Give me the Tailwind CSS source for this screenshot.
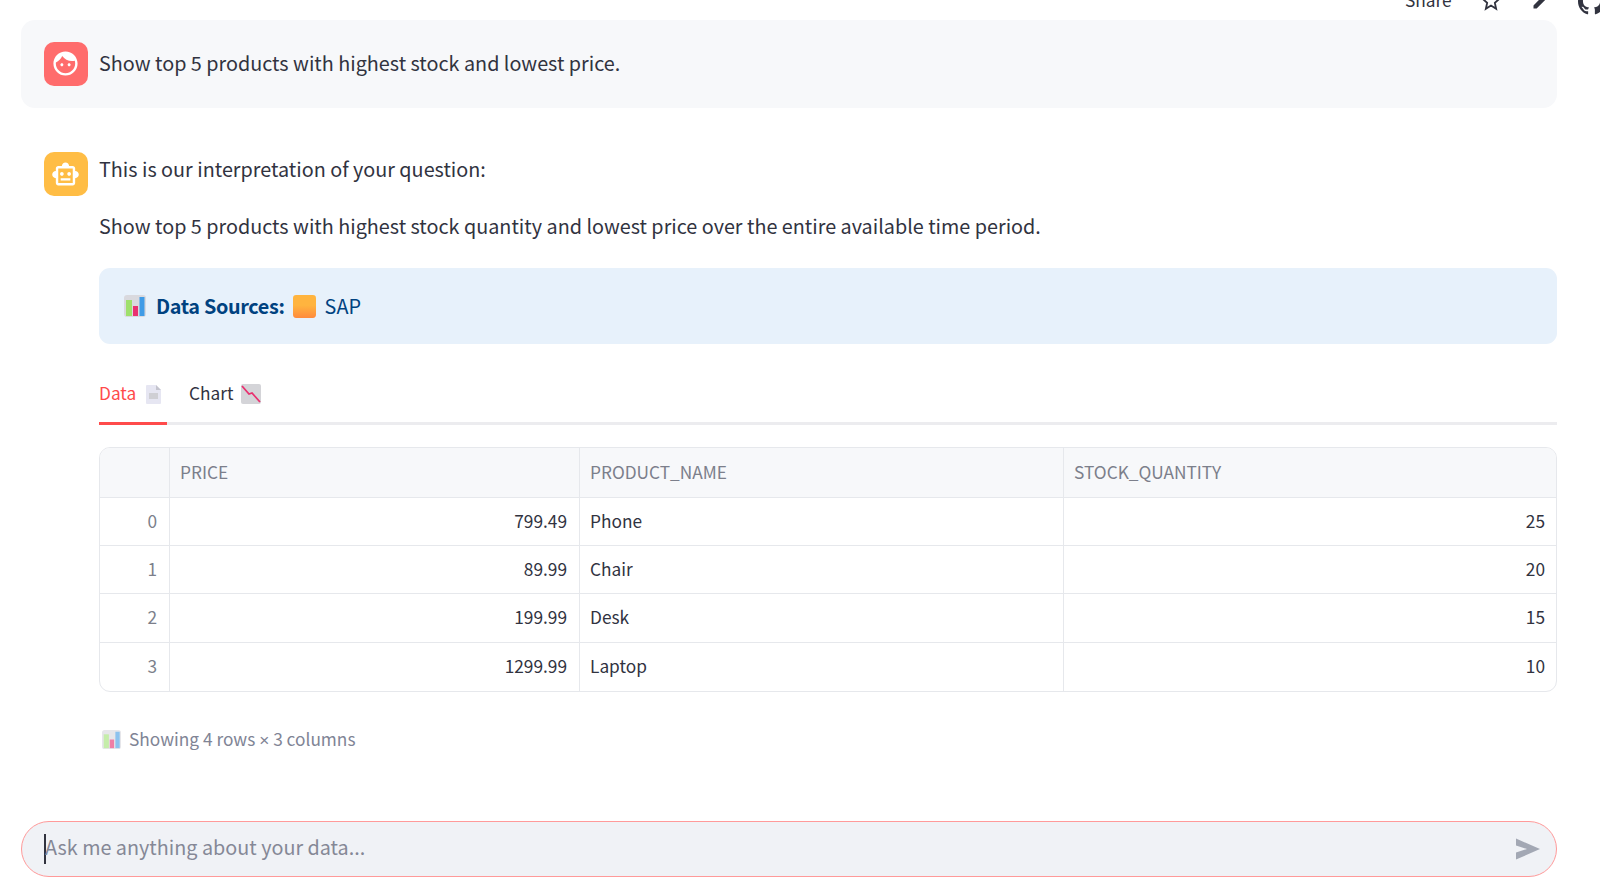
<!DOCTYPE html>
<html>
<head>
<meta charset="utf-8">
<script src="https://cdn.jsdelivr.net/npm/@tailwindcss/browser@4"></script>
</head>
<body class="bg-white">
<div class="relative w-[1600px] h-[885px] overflow-hidden bg-white font-['Noto_Sans_CJK_SC','Noto_Sans',sans-serif] text-[#31333f]">

  <!-- top toolbar, cut by the window edge -->
  <div class="absolute right-[-5px] top-[-11px] flex items-center h-[24px] text-[#31333f]">
    <span class="text-[17.300px] leading-[24px] mr-[28.500px] mt-[-3px]">Share</span>
    <svg class="w-[22px] h-[22px] mr-[29px]" viewBox="0 0 24 24" fill="none" stroke="#31333f" stroke-width="2"><path d="M12 3l2.700 6.100 6.300.6-4.800 4.300 1.400 6.500L12 17l-5.600 3.500 1.400-6.500L3 9.700l6.300-.6z"/></svg>
    <svg class="w-[20px] h-[20px] mr-[27px] mt-[-1px]" viewBox="0 0 24 24" fill="#31333f"><path d="M3 17.250V21h3.750L17.810 9.940l-3.750-3.750L3 17.250zM20.710 7.040a1 1 0 000-1.410l-2.340-2.340a1 1 0 00-1.410 0l-1.830 1.830 3.750 3.750 1.830-1.830z"/></svg>
    <svg class="w-[27px] h-[27px]" viewBox="0 0 16 16" fill="#31333f"><path d="M8 0C3.580 0 0 3.580 0 8c0 3.540 2.290 6.530 5.470 7.590.4.070.55-.17.55-.38 0-.19-.01-.82-.01-1.490-2.010.37-2.530-.49-2.690-.94-.09-.23-.48-.94-.82-1.130-.28-.15-.68-.52-.01-.53.63-.01 1.080.58 1.230.82.720 1.210 1.870.87 2.330.66.070-.52.280-.87.510-1.070-1.780-.2-3.640-.89-3.640-3.950 0-.87.310-1.590.820-2.150-.08-.2-.36-1.020.080-2.120 0 0 .67-.21 2.200.820.640-.18 1.320-.27 2-.27s1.360.09 2 .27c1.530-1.040 2.200-.82 2.200-.82.440 1.100.160 1.920.080 2.120.510.560.820 1.270.820 2.150 0 3.070-1.870 3.750-3.650 3.950.290.250.540.730.540 1.480 0 1.070-.01 1.930-.01 2.200 0 .21.150.460.550.380A8.010 8.010 0 0016 8c0-4.420-3.580-8-8-8z"/></svg>
  </div>

  <div class="flex flex-col w-[1536px] ml-[21px] pt-[20px]">

    <!-- user message -->
    <div class="flex items-center gap-[11.500px] h-[88px] px-[22.500px] bg-[#f7f8fa] rounded-[14px]">
      <div class="flex items-center justify-center w-[44px] h-[44px] mt-[-1px] rounded-[10px] bg-[#ff6c6c]">
        <svg class="w-[29px] h-[29px]" viewBox="0 0 24 24" fill="#fff"><path d="M9 11.750c-.69 0-1.250.56-1.250 1.250s.56 1.250 1.250 1.250 1.250-.56 1.250-1.250-.56-1.250-1.250-1.250zm6 0c-.69 0-1.250.56-1.250 1.250s.56 1.250 1.250 1.250 1.250-.56 1.250-1.250-.56-1.250-1.250-1.250zM12 2C6.480 2 2 6.480 2 12s4.480 10 10 10 10-4.480 10-10S17.520 2 12 2zm0 18c-4.410 0-8-3.590-8-8 0-.29.020-.58.050-.86 2.360-1.050 4.230-2.980 5.210-5.370C11.070 8.330 14.050 10 17.420 10c.78 0 1.530-.09 2.250-.26.21.71.33 1.470.33 2.260 0 4.410-3.590 8-8 8z"/></svg>
      </div>
      <p class="text-[19.800px] leading-[32px] mt-[-2px]">Show top 5 products with highest stock and lowest price.</p>
    </div>

    <!-- assistant message -->
    <div class="flex gap-[11.500px] pl-[22.500px] pt-[44px]">
      <div class="flex items-center justify-center shrink-0 w-[44px] h-[44px] rounded-[10px] bg-[#ffbd45]">
        <svg class="w-[29px] h-[29px]" viewBox="0 0 24 24" fill="#fff"><path d="M20 9V7c0-1.100-.9-2-2-2h-3c0-1.660-1.340-3-3-3S9 3.340 9 5H6c-1.100 0-2 .9-2 2v2c-1.660 0-3 1.340-3 3s1.340 3 3 3v4c0 1.100.9 2 2 2h12c1.100 0 2-.9 2-2v-4c1.660 0 3-1.340 3-3s-1.340-3-3-3zm-2 10H6V7h12v12zm-9-6c-.83 0-1.500-.67-1.500-1.500S8.170 10 9 10s1.500.67 1.500 1.500S9.830 13 9 13zm7.500-1.500c0 .83-.67 1.500-1.500 1.500s-1.500-.67-1.500-1.500.67-1.500 1.500-1.500 1.500.67 1.500 1.500zM8 15h8v2H8v-2z"/></svg>
      </div>
      <div class="flex-1 min-w-0">
        <p class="text-[19.800px] leading-[32px] mt-[1px]">This is our interpretation of your question:</p>
        <p class="text-[19.800px] leading-[32px] mt-[25px]">Show top 5 products with highest stock quantity and lowest price over the entire available time period.</p>

        <!-- info box -->
        <div class="flex items-center h-[76px] mt-[26px] pl-[25px] rounded-[11px] bg-[#e7f1fb] text-[19.800px] text-[#004280]">
          <svg class="w-[22px] h-[22px] mr-[10px]" viewBox="0 0 22 22"><rect width="22" height="22" rx="3" fill="#d9d9de"/><rect x="2" y="5" width="6" height="16" fill="#9fe06c"/><rect x="9" y="11" width="5" height="10" fill="#e9306f"/><rect x="15.500" y="2" width="5" height="19" fill="#3f9be6"/></svg>
          <b class="font-semibold tracking-[-0.32px] mt-[-1px]">Data Sources:</b>
          <svg class="w-[23px] h-[23px] ml-[8px] mr-[9px]" viewBox="0 0 22 22"><defs><linearGradient id="o" x1="0" y1="0" x2="0" y2="1"><stop offset=".45" stop-color="#ffb43f"/><stop offset="1" stop-color="#ff8a3c"/></linearGradient></defs><rect width="22" height="22" rx="3" fill="url(#o)"/></svg>
          <span class="mt-[-1px]">SAP</span>
        </div>

        <!-- tabs -->
        <div class="flex h-[58px] mt-[23px] border-b-[3px] border-[#ececef] text-[17.300px]">
          <div class="flex items-center gap-[10px] h-[58px] w-[68px] border-b-[3px] border-[#ff4b4b] text-[#ff4b4b]">
            <span class="mt-[-3px]">Data</span>
            <svg class="w-[15px] h-[19px] mt-[-1px]" viewBox="0 0 15 19"><path d="M0 1a1 1 0 011-1h9l5 5v13a1 1 0 01-1 1H1a1 1 0 01-1-1z" fill="#e6e6f2"/><path d="M10 0l5 5h-5z" fill="#c4c4ce"/><rect x="3" y="8" width="9" height="6" fill="#cfcfd4"/></svg>
          </div>
          <div class="flex items-center gap-[8px] ml-[22px] h-[58px] border-b-[3px] border-transparent">
            <span class="mt-[-3px]">Chart</span>
            <svg class="w-[20px] h-[20px] mt-[-1px]" viewBox="0 0 20 20"><rect width="20" height="20" rx="2" fill="#d4d4d8"/><path d="M1 2l7 8 3-1 8 9" fill="none" stroke="#e9306f" stroke-width="1.800"/></svg>
          </div>
        </div>

        <!-- table -->
        <div class="mt-[22px] border border-[#e6e8ec] rounded-[11px] overflow-hidden text-[17.300px] grid grid-cols-[70px_410px_484px_1fr] grid-rows-[50px_repeat(4,48.200px)]">
          <div class="bg-[#f7f8fa] border-r border-b border-[#e6e8ec]"></div>
          <div class="bg-[#f7f8fa] border-r border-b border-[#e6e8ec] text-[#7c7f8b] flex items-center px-[10px] pb-[2px]">PRICE</div>
          <div class="bg-[#f7f8fa] border-r border-b border-[#e6e8ec] text-[#7c7f8b] flex items-center px-[10px] pb-[2px]">PRODUCT_NAME</div>
          <div class="bg-[#f7f8fa] border-b border-[#e6e8ec] text-[#7c7f8b] flex items-center px-[10px] pb-[2px]">STOCK_QUANTITY</div>

          <div class="border-r border-b border-[#e6e8ec] text-[#7c7f8b] flex items-center justify-end px-[12px] pb-[2px]">0</div>
          <div class="border-r border-b border-[#e6e8ec] flex items-center justify-end px-[12px] pb-[2px]">799.49</div>
          <div class="border-r border-b border-[#e6e8ec] flex items-center px-[10px] pb-[2px]">Phone</div>
          <div class="border-b border-[#e6e8ec] flex items-center justify-end px-[11px] pb-[2px]">25</div>

          <div class="border-r border-b border-[#e6e8ec] text-[#7c7f8b] flex items-center justify-end px-[12px] pb-[2px]">1</div>
          <div class="border-r border-b border-[#e6e8ec] flex items-center justify-end px-[12px] pb-[2px]">89.99</div>
          <div class="border-r border-b border-[#e6e8ec] flex items-center px-[10px] pb-[2px]">Chair</div>
          <div class="border-b border-[#e6e8ec] flex items-center justify-end px-[11px] pb-[2px]">20</div>

          <div class="border-r border-b border-[#e6e8ec] text-[#7c7f8b] flex items-center justify-end px-[12px] pb-[2px]">2</div>
          <div class="border-r border-b border-[#e6e8ec] flex items-center justify-end px-[12px] pb-[2px]">199.99</div>
          <div class="border-r border-b border-[#e6e8ec] flex items-center px-[10px] pb-[2px]">Desk</div>
          <div class="border-b border-[#e6e8ec] flex items-center justify-end px-[11px] pb-[2px]">15</div>

          <div class="border-r border-[#e6e8ec] text-[#7c7f8b] flex items-center justify-end px-[12px] pb-[2px]">3</div>
          <div class="border-r border-[#e6e8ec] flex items-center justify-end px-[12px] pb-[2px]">1299.99</div>
          <div class="border-r border-[#e6e8ec] flex items-center px-[10px] pb-[2px]">Laptop</div>
          <div class="flex items-center justify-end px-[11px] pb-[2px]">10</div>
        </div>

        <!-- row count -->
        <div class="flex items-center h-[32px] mt-[32px] pl-[3px] text-[17.300px] text-[#808495]">
          <svg class="w-[19px] h-[19px] mr-[8px]" viewBox="0 0 22 22"><rect width="22" height="22" rx="3" fill="#e6e6ea"/><rect x="2" y="5" width="6" height="16" fill="#c5edaa"/><rect x="9" y="11" width="5" height="10" fill="#ef7fa6"/><rect x="15.500" y="2" width="5" height="19" fill="#8cc2ee"/></svg>
          <span>Showing 4 rows <span class="font-['Liberation_Sans']">×</span> 3 columns</span>
        </div>
      </div>
    </div>

    <!-- chat input -->
    <div class="flex items-center justify-between h-[56px] mt-[65px] pl-[22px] pr-[15px] rounded-[28px] border border-[#ff9a9a] bg-[#f0f2f6]">
      <div class="flex items-center">
        <span class="w-[2px] h-[30px] bg-[#31333f]"></span>
        <span class="text-[19.800px] text-[#858896] ml-[-1px] mt-[-4px]">Ask me anything about your data...</span>
      </div>
      <svg class="w-[26px] h-[24px]" viewBox="0 0 26 24" fill="#a3a8b4"><path d="M1 1.500L25 12 1 22.500v-7L12 12 1 8.500z"/></svg>
    </div>
  </div>
</div>
</body>
</html>
